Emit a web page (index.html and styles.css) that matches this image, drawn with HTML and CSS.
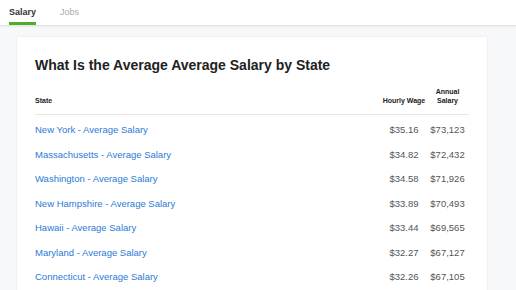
FILE: index.html
```html
<!DOCTYPE html>
<html lang="en">
<head>
<meta charset="utf-8">
<title>Average Salary by State</title>
<link rel="stylesheet" href="styles.css">
</head>
<body>
<header class="topbar">
  <nav class="tabs">
    <a class="tab active" href="#">Salary</a>
    <a class="tab" href="#">Jobs</a>
  </nav>
</header>
<main class="page">
  <section class="card">
    <h1 class="title">What Is the Average Average Salary by State</h1>
    <table class="salary-table">
      <thead>
        <tr>
          <th class="col-state">State</th>
          <th class="col-num col-hourly">Hourly Wage</th>
          <th class="col-num col-annual">Annual Salary</th>
        </tr>
      </thead>
      <tbody>
        <tr><td><a href="#">New York - Average Salary</a></td><td class="num">$35.16</td><td class="num">$73,123</td></tr>
        <tr><td><a href="#">Massachusetts - Average Salary</a></td><td class="num">$34.82</td><td class="num">$72,432</td></tr>
        <tr><td><a href="#">Washington - Average Salary</a></td><td class="num">$34.58</td><td class="num">$71,926</td></tr>
        <tr><td><a href="#">New Hampshire - Average Salary</a></td><td class="num">$33.89</td><td class="num">$70,493</td></tr>
        <tr><td><a href="#">Hawaii - Average Salary</a></td><td class="num">$33.44</td><td class="num">$69,565</td></tr>
        <tr><td><a href="#">Maryland - Average Salary</a></td><td class="num">$32.27</td><td class="num">$67,127</td></tr>
        <tr><td><a href="#">Connecticut - Average Salary</a></td><td class="num">$32.26</td><td class="num">$67,105</td></tr>
      </tbody>
    </table>
  </section>
</main>
</body>
</html>
```
FILE: styles.css
```css
* { box-sizing: border-box; }
html, body { margin: 0; padding: 0; }
body {
  font-family: "Liberation Sans", Arial, sans-serif;
  background: #f7f8fa;
  color: #333;
  overflow: hidden;
  height: 290px;
}
.topbar {
  background: #fff;
  height: 25px;
  box-shadow: 0 1px 2px rgba(0,0,0,0.12);
  position: relative;
  z-index: 1;
}
.tabs {
  display: flex;
  gap: 24px;
  padding-left: 9px;
  height: 100%;
}
.tab {
  font-size: 9px;
  text-decoration: none;
  color: #aaa;
  padding-top: 7px;
  height: 25px;
  border-bottom: 2px solid transparent;
}
.tab.active {
  color: #333;
  font-weight: bold;
  border-bottom: 3px solid #4cae2b;
}
.page {
  padding: 12px 0 0 17px;
}
.card {
  width: 470px;
  background: #fff;
  padding: 18px 18px 0;
  box-shadow: 0 0 2px rgba(0,0,0,0.08);
  height: 300px;
}
.title {
  margin: 0;
  font-size: 14px;
  font-weight: bold;
  color: #222;
  line-height: 18px;
  padding-top: 1px;
}
.salary-table {
  width: 100%;
  border-collapse: collapse;
  margin-top: 13px;
}
.salary-table th {
  font-size: 7px;
  font-weight: bold;
  color: #222;
  vertical-align: bottom;
  padding: 0 0 9px;
  line-height: 9px;
  border-bottom: 1px solid #e6e6e6;
}
.col-state { text-align: left; }
.col-num { text-align: center; }
.col-hourly { width: 44px; }
.col-annual { width: 43px; }
.salary-table td {
  font-size: 9.5px;
  line-height: 13px;
  padding: 8px 0 3.5px;
}
.salary-table td a {
  color: #2c7ad6;
  text-decoration: none;
}
.salary-table td.num {
  text-align: center;
  color: #555;
}
```
